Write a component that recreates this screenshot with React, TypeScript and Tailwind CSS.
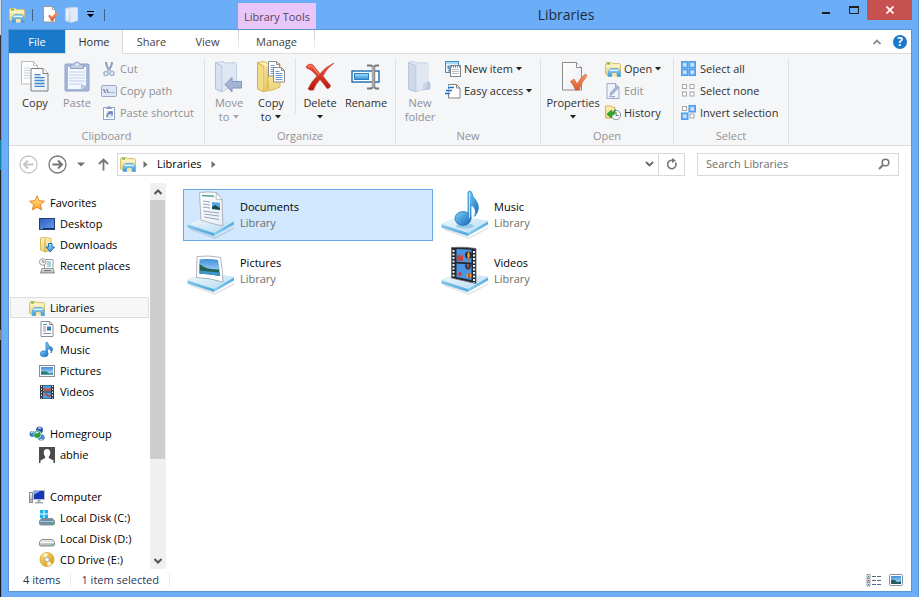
import React, { useState } from "react";

type IconProps = { className?: string };

/* Gradients shared by the icons below */
function Gradients() {
  const g = (id: string, a: string, b: string, diag = false) => (
    <linearGradient id={id} x1="0" y1="0" x2={diag ? "1" : "0"} y2="1">
      <stop offset="0" stopColor={a} />
      <stop offset="1" stopColor={b} />
    </linearGradient>
  );
  return (
    <svg width="0" height="0" className="absolute" aria-hidden="true">
      <defs>
        {g("gFolder", "#fdf3bd", "#ecd27a")}
        {g("gFolderDark", "#f8e6a0", "#d9b347", true)}
        {g("gPale", "#e8eef7", "#c0cde2", true)}
        {g("gBlue", "#a4e0fa", "#2f92d6")}
        {g("gNote", "#7fd0f7", "#1166b8", true)}
        {g("gPaper", "#ffffff", "#e9edf3", true)}
        {g("gPlate", "#f4fbff", "#b5d9f0", true)}
        {g("gPlateL", "#8ccbee", "#4aa3d8")}
        {g("gPlateR", "#4aa6dc", "#8fd0f2")}
        {g("gRed", "#f2583a", "#b5140c")}
        {g("gOrange", "#f49a6a", "#dc5a2b")}
        {g("gStar", "#ffe88a", "#f9a02c")}
        {g("gScreen", "#2a5fc4", "#6c9be4", true)}
        {g("gSky", "#3f8fdc", "#c9ecf7")}
        {g("gGrey", "#f2f2f2", "#a9adb2")}
        {g("gGold", "#fbe373", "#cf9413", true)}
      </defs>
    </svg>
  );
}

function Svg({ w, h, className = "", children }: { w: number; h: number; className?: string; children: React.ReactNode }) {
  return (
    <svg width={w} height={h} viewBox={`0 0 ${w} ${h}`} className={`block shrink-0 ${className}`} aria-hidden="true" fill="none">
      {children}
    </svg>
  );
}

const LibraryIcon = ({ className }: IconProps) => (
  <Svg w={16} h={16} className={className}>
    <path d="M.5 13V2.500l1-1h5l1 1h7l1 1V13l-1 .8h-13z" fill="url(#gFolder)" stroke="#d8bf72" />
    <path d="M2 2.800h3" stroke="#4cb845" strokeWidth="1.400" />
    <path d="M1 5h14" stroke="#fffbe0" />
    <path d="M3 15.500 3.500 10 5.500 7.500h7.500l2 2.500.5 5.500H12V12q-2.500-1.500-5.500 0v3.500z" fill="url(#gBlue)" stroke="#5aaadb" strokeWidth=".8" />
    <path d="M4.500 9.500h9" stroke="#e2f6fe" />
    <path d="M7 15.500v-3q2.500-1 4.500 0v3z" fill="#f4e7ae" />
  </Svg>
);

const CheckPage = () => (
  <Svg w={16} h={17}>
    <path d="M.5.500h9l3 3v12.500H.5z" fill="#fff" stroke="#9b9b9b" />
    <path d="M9.500.5v3h3" stroke="#9b9b9b" />
    <path d="m5 10 2-1.500 2 2.500q2.500-4 5.500-5l1 2q-3.500 2.500-5.500 7.500H8.500Q7 12 5 10z" fill="url(#gOrange)" />
  </Svg>
);

const PaleFolderSmall = () => (
  <Svg w={14} h={16}>
    <path d="M.5 1.500 6 .5h6.500v13l-6.500 2-5.500-2z" fill="url(#gPale)" stroke="#c5d3e6" />
    <path d="M6 2.500v13l6.500-2V.5z" fill="#e4ecf7" opacity=".8" />
    <path d="M2.500 2.500v11" stroke="#f5f8fc" />
  </Svg>
);

const CopyIcon = () => (
  <Svg w={28} h={32}>
    <path d="M.5.5h12l4 4v18.500H.5z" fill="#fdfdfd" stroke="#bdbdbd" />
    <path d="M12.500.5v4h4" stroke="#bdbdbd" />
    <path d="M3 7h6M3 9.500h6M3 12h6M3 14.500h6M3 17h6" stroke="#c3d3e6" />
    <path d="M10 7.500h12l5 5V30H10z" fill="url(#gPaper)" stroke="#7d7d7d" />
    <path d="M22 7.500v5h5" fill="#fff" stroke="#7d7d7d" />
    <path d="M13.500 13.500h6M13.500 16.500h10M13.500 19.500h10M13.500 22.500h10M13.500 25.500h10" stroke="#3f87cf" />
    <path d="M13.500 15h6M13.500 18h10M13.500 21h10M13.500 24h10" stroke="#8ebbe8" />
  </Svg>
);

const PasteIcon = () => (
  <Svg w={26} h={32}>
    <rect x="1" y="3" width="24" height="27" rx="1" fill="#a5b6d8" stroke="#8ea2c9" />
    <path d="M4 6h18v18.500L17.500 28H4z" fill="#f5f8fd" />
    <path d="M5 11h16M5 14h16M5 17h16M5 20h16M5 23h14" stroke="#d1dcf0" strokeWidth="1.400" />
    <path d="M22 24h-5v4z" fill="#b8c6df" />
    <path d="M6.500 7.500V5q0-1.500 2-1.500h1Q10.500 1 13 1t3.500 2.500h1q2 0 2 1.500v2.500z" fill="#c2cee4" stroke="#8ea2c9" />
    <circle cx="13" cy="3.500" r="1" fill="#fff" />
  </Svg>
);

const CutIcon = () => (
  <Svg w={16} h={16}>
    <path d="M5 1q0 4 3.500 8.500M11 1q0 4-3.500 8.500" stroke="#8d9dba" strokeWidth="2" />
    <circle cx="5" cy="12.500" r="2" stroke="#a3b5d4" strokeWidth="1.600" />
    <circle cx="11" cy="12.500" r="2" stroke="#a3b5d4" strokeWidth="1.600" />
    <path d="m6 11 2-3 2 3" stroke="#a3b5d4" strokeWidth="1.500" />
  </Svg>
);

const CopyPathIcon = () => (
  <Svg w={16} h={16}>
    <rect x=".5" y="2.500" width="15" height="11" rx="1" fill="#dfe6f3" stroke="#9aa9c6" />
    <path d="m2.500 6 2 4M5.500 6l2 4" stroke="#6c7ea6" strokeWidth="1.200" />
    <path d="M8.500 9.500h1M10.500 9.500h1M12.500 9.500h1" stroke="#6c7ea6" />
  </Svg>
);

const PasteShortcutIcon = () => (
  <Svg w={16} h={16}>
    <path d="M2.500 2.500h11v12h-11z" fill="#fff" stroke="#8fa3c9" />
    <path d="M5 4V2h1.500q1.500-2 3 0H11v2z" fill="#8fa3c9" />
    <rect x="5" y="6" width="7" height="7" fill="#dae3f2" />
    <path d="M6 12q0-4 4-4M7.500 7H11v3.500" stroke="#657eb3" strokeWidth="1.400" />
  </Svg>
);

const MoveToIcon = () => (
  <Svg w={30} h={32}>
    <path d="M1.500 1.500 9 .5l3 1.500 9-.5 1.500 1v19L8 31 1.500 28z" fill="url(#gPale)" stroke="#c3d0e4" />
    <path d="M1.500 1.500 8 5v26l-6.500-3z" fill="#d8e1ef" stroke="#b3c2dc" />
    <path d="M8.500 5 12 3.500l10-1V21l-9 6-4.500 3.500z" fill="#dfe7f3" />
    <path d="m11 23.500 7-7v4h9.500v6.500H18v4z" fill="#a3b5d3" stroke="#8296bd" />
  </Svg>
);

const Page = ({ x, y }: { x: number; y: number }) => (
  <g transform={`translate(${x} ${y})`}>
    <path d="M.5.500h8l3 3v11.500H.5z" fill="#fff" stroke="#8c8c8c" />
    <path d="M8.500.5v3h3" stroke="#8c8c8c" />
    <path d="M2.500 4.500h4M2.500 6.500h7M2.500 8.500h7M2.500 10.500h7M2.500 12.500h7" stroke="#6c9ccb" />
  </g>
);

const CopyToIcon = () => (
  <Svg w={30} h={32}>
    <path d="M1.500 1.500 8 .5l4 2h12V26l-7 3-9 1.500-6.500-3z" fill="url(#gFolder)" stroke="#e0bb5c" />
    <path d="M1.500 1.500 8 5.500V31l-6.500-3z" fill="#f3da84" stroke="#dbae43" />
    <path d="M8.500 5.500h4.500v22L8.500 31z" fill="url(#gFolderDark)" />
    <Page x={12} y={0} />
    <Page x={17} y={6} />
  </Svg>
);

const DeleteIcon = () => (
  <Svg w={30} h={30}>
    <path d="M1.500 4Q5 .5 8 3q4 5 7 9Q20 5 29 1q-8 6-11 13 3 4 7.500 9.500Q25 27 22 26.500q-3.500-5-7-9Q10 23 8.500 28 5 29 3 27q3-7 9-13Q6 7 1.500 6z" fill="url(#gRed)" stroke="#c0342a" strokeWidth=".600" />
    <path d="M3.500 4.500Q6 3 7.500 4.500L14 13" stroke="#f9a28c" />
  </Svg>
);

const RenameIcon = () => (
  <Svg w={30} h={28}>
    <rect x="1" y="8" width="27" height="11" fill="#fff" stroke="#1e69b0" strokeWidth="1.400" />
    <rect x="3.500" y="10.500" width="14" height="6" fill="url(#gBlue)" stroke="#2f7dc0" />
    <path d="M16 2.500h4l2.500 1.500L25 2.500h3M16 25.500h4l2.500-1.500 2.500 1.500h3" stroke="#777" strokeWidth="2" />
    <path d="M22.500 3v22" stroke="#8a8a8a" strokeWidth="3.500" />
    <path d="M22 4v20" stroke="#c9c9c9" />
  </Svg>
);

const NewFolderIcon = () => (
  <Svg w={26} h={32}>
    <path d="M1.500 1.500 6 .5l4 1.500 9-.5 2 1v18l2 1.500v6l-9 1-5 2-7.500-3z" fill="url(#gPale)" stroke="#c9d5e7" />
    <path d="M1.500 1.500 9 5v26l-7.500-3z" fill="#cdd9ea" stroke="#b7c6de" />
    <path d="M9.500 5 21 2.500v18l-5 2v5l-6.500 3z" fill="#dfe7f3" />
    <path d="m20.500 20.500 2.500 1.500v6l-8 1.500 5.500-3z" fill="#b6c5dd" />
  </Svg>
);

const NewItemIcon = () => (
  <Svg w={16} h={16}>
    <path d="M.5.500h13v11H.5z" fill="#e2f2fc" stroke="#3a8dc9" />
    <path d="M1 2h12" stroke="#a9d8f3" strokeWidth="2" />
    <path d="M4.500 5q-3 1 0 2.500t-1 2.500" stroke="#2d84c5" strokeWidth="1.500" />
    <path d="M5.500 4.500h10v11h-10z" fill="#fff" stroke="#828282" />
    <path d="M6 5.500h9" stroke="#777" strokeDasharray="1 1" strokeWidth="2" />
    <path d="M7 8.500h7M7 10.500h7M7 12.500h7" stroke="#b6bcc4" />
  </Svg>
);

const EasyAccessIcon = () => (
  <Svg w={16} h={16}>
    <path d="M3.500 1.500h8l3.500 3.500v10H3.500z" fill="#fff" stroke="#828282" />
    <path d="M11.500 1.500V5H15" stroke="#828282" />
    <path d="M2 3.500h6M1 6.500h6M0 9.500h6" stroke="#f5f6f7" />
    <path d="M3 4.500h6M1 7.500h6M0 10.500h5" stroke="#1c72ce" strokeWidth="1.400" />
  </Svg>
);

const PropertiesIcon = () => (
  <Svg w={28} h={32}>
    <path d="M3.500 1.500h14l5 5v22.500h-19z" fill="url(#gPaper)" stroke="#8b8b8b" />
    <path d="M17.500 1.500v5h5" fill="#fff" stroke="#8b8b8b" />
    <path d="m11.500 20.500 3.500-2.500 3 5q4-7 8.500-10l1.500 2q-5.500 6-8 14h-3.500Q15 25 11.500 20.500z" fill="url(#gOrange)" stroke="#d4602f" strokeWidth=".7" />
  </Svg>
);

const EditIcon = () => (
  <Svg w={16} h={16}>
    <path d="M2 .5h8.500l3.500 3.500v11.500H2z" fill="#eef2f9" stroke="#9cabc9" />
    <path d="M10.500.5V4H14" stroke="#9cabc9" />
    <path d="m5 12 .8-2.500 5.700-6 1.700 1.600L7.500 11z" fill="#a9b9d7" stroke="#8295bb" strokeWidth=".7" />
    <path d="M4 13.500q2-1 3 0t3 0" stroke="#8295bb" />
  </Svg>
);

const HistoryIcon = () => (
  <Svg w={16} h={16}>
    <path d="M.5 1h6l1 1.500H10v8L6 13H.500z" fill="url(#gFolder)" stroke="#d9b24c" />
    <circle cx="11" cy="10" r="4.700" fill="#f5f8fa" stroke="#8d979e" />
    <path d="M11 7v3.500h2.500" stroke="#66727b" />
    <path d="m2 9 4.500-4v2.500q3 0 3.500-3 1 5.500-3.500 6V13z" fill="#2aa82b" stroke="#1b851f" strokeWidth=".6" />
  </Svg>
);

function Tile({ x, y, on }: { x: number; y: number; on: boolean }) {
  return on ? (
    <g>
      <rect x={x} y={y} width="7.500" height="7.500" fill="#4b9ff0" />
      <rect x={x + 2} y={y + 2} width="3.500" height="3.500" fill="#d3e8fb" stroke="#9accf8" />
    </g>
  ) : (
    <rect x={x + 1.5} y={y + 1.5} width="4" height="4" fill="#fff" stroke="#a6a6a6" />
  );
}

const SelectIcon = ({ on }: { on: [boolean, boolean, boolean, boolean] }) => (
  <Svg w={16} h={16}>
    <Tile x={0} y={0} on={on[0]} />
    <Tile x={7.5} y={0} on={on[1]} />
    <Tile x={0} y={7.500} on={on[2]} />
    <Tile x={7.500} y={7.500} on={on[3]} />
  </Svg>
);

const StarIcon = () => (
  <Svg w={16} h={16}>
    <path d="m8 .8 2.100 4.900 5.300.5-4 3.500 1.200 5.200L8 12.200l-4.600 2.700 1.200-5.200-4-3.500 5.300-.5z" fill="url(#gStar)" stroke="#e8862a" />
  </Svg>
);

const DesktopIcon = () => (
  <Svg w={16} h={16}>
    <rect x=".5" y="2.500" width="15" height="11" fill="url(#gScreen)" stroke="#23407c" />
    <path d="M1 12.500h14" stroke="#1b2f5c" />
    <path d="M1.500 12.500h2" stroke="#6fd0f0" />
  </Svg>
);

const DownloadsIcon = () => (
  <Svg w={16} h={16}>
    <path d="M1.500 1 6 .5l6 1V13l-6 2-4.500-2z" fill="url(#gFolder)" stroke="#dcb856" />
    <path d="M6 2v13" stroke="#cfa53d" />
    <path d="M9.500 6.500h3.500V10h2.500L11.200 15 7 10h2.500z" fill="url(#gBlue)" stroke="#1f6fb5" />
  </Svg>
);

const RecentIcon = () => (
  <Svg w={16} h={16}>
    <path d="M5.500 1.500h8.500v9H5.500z" fill="#fff" stroke="#9a9fa5" />
    <path d="M8 4h4M8 6h4M8 8h4" stroke="#5da2bd" />
    <path d="m3 10.500-1.500 4.500h14L14 10.500z" fill="url(#gGrey)" stroke="#8c9196" />
    <path d="M5 12.500h7" stroke="#6a6f74" />
    <circle cx="3.800" cy="4" r="3.300" fill="#f6f8fa" stroke="#9aa0a6" />
    <path d="M3.800 2v2.200h1.800" stroke="#6c7378" />
  </Svg>
);

const DocSmallIcon = () => (
  <Svg w={16} h={16}>
    <path d="M2 .5h8.500l3.500 3v12H2z" fill="#fff" stroke="#8a8f96" />
    <path d="M10.500.5v3H14" stroke="#8a8f96" />
    <path d="M4 3.500h4" stroke="#4f9aa8" />
    <path d="M4 6h3M4 8h3M4 10h3M4 12.500h8" stroke="#8d96ad" />
    <rect x="8" y="5.500" width="4" height="4" fill="#3c80c8" />
    <path d="M8 8.500h4" stroke="#2a7e5c" />
  </Svg>
);

const NoteSmallIcon = () => (
  <Svg w={16} h={16}>
    <path d="M7 .5h1.500Q9 4 12 5t0 6q1-3.500-3.500-4.500V12H7z" fill="url(#gNote)" stroke="#2b84cc" strokeWidth=".8" />
    <ellipse cx="5.200" cy="11.800" rx="4" ry="3" fill="url(#gNote)" stroke="#2b84cc" strokeWidth=".8" />
  </Svg>
);

const PictureSmallIcon = () => (
  <Svg w={16} h={16}>
    <rect x=".5" y="2.500" width="15" height="11" fill="#fff" stroke="#898e94" />
    <rect x="2" y="4" width="12" height="8" fill="url(#gSky)" />
    <path d="M2 8.500q5-1 7 1t5 0V12H2z" fill="#2b7b76" />
    <path d="M2 11.500h12" stroke="#4fa8cf" />
  </Svg>
);

const VideoSmallIcon = () => (
  <Svg w={16} h={16}>
    <rect x="1" y="1" width="14" height="14" fill="#2e3440" />
    <path d="M2.500 1.500v13M13.500 1.500v13" stroke="#e8ecef" strokeDasharray="1.500 1.500" />
    <rect x="4" y="1.500" width="8" height="6" fill="#4aa0e2" />
    <rect x="4" y="8.500" width="8" height="6" fill="#4aa0e2" />
    <path d="M4 4.500q2-1.500 3 0t5-1v3.500H5z" fill="#c45343" />
    <path d="M5 10q3-1 4 .5t3 0V12l-3 1z" fill="#b94a3f" />
  </Svg>
);

const HomegroupIcon = () => (
  <Svg w={16} h={16}>
    <circle cx="3.500" cy="8" r="3" fill="#3f78c2" />
    <circle cx="10.500" cy="4" r="3.500" fill="#2b57ac" />
    <circle cx="12.300" cy="11.500" r="3.300" fill="#4d88cf" />
    <circle cx="8.300" cy="8.500" r="3.800" fill="#2c9c43" stroke="#cfe6f5" strokeWidth=".7" />
    <path d="M2 7q1-1.500 2.500-1M9 2.500q1.500-1.200 3 0M6.500 7.500q1-1.500 3-1M11 13.500q1 1 2.500 0" stroke="#d5ecfb" strokeWidth="1.200" />
  </Svg>
);

const UserIcon = () => (
  <Svg w={16} h={16}>
    <rect width="16" height="16" fill="#4b4b4b" />
    <path d="M8 2q3.300 0 3.300 3.800 0 2.500-1.500 4V11l4.700 2.500V16h-13v-2.500L6.200 11V9.800q-1.500-1.500-1.500-4Q4.700 2 8 2z" fill="#fff" />
  </Svg>
);

const ComputerIcon = () => (
  <Svg w={16} h={16}>
    <rect x=".5" y="3.500" width="3" height="10" fill="url(#gGrey)" stroke="#8a8f95" />
    <path d="M1.500 10.500h1" stroke="#2faa3c" />
    <rect x="4.500" y="1.500" width="11" height="9" fill="#1637b4" stroke="#b9bfc8" />
    <path d="M5 2h6q-3 3-6 3.500z" fill="#7fa5ee" />
    <path d="M8.500 11h3v2h2.500v1.500H6V13h2.500z" fill="#a7adb5" />
  </Svg>
);

const DriveIcon = ({ system }: { system?: boolean }) => (
  <Svg w={16} h={16}>
    {system && (
      <path d="M1 0h3.500v3.500H1zM5.500 0H9v3.500H5.500zM1 4.500h3.500V8H1zM5.500 4.500H9V8H5.500z" fill="#18b4ee" />
    )}
    <path d="M2.500 8.500h11l2 2.500v3l-1 1h-13l-1-1v-3z" fill={system ? "#6e8fa6" : "url(#gGrey)"} stroke="#8a8e93" />
    <path d="M1 11.500h14" stroke={system ? "#a5c7dc" : "#fff"} />
    <path d="M12.500 13.500h1.500" stroke="#3ccb3a" strokeWidth="1.600" />
  </Svg>
);

const DiscIcon = () => (
  <Svg w={16} h={16}>
    <circle cx="8" cy="7.500" r="7" fill="url(#gGold)" stroke="#c9971f" strokeWidth=".7" />
    <path d="M8 7.500 3.500 2.500Q6 .8 8.500 1zM8 7.500l5 4.500q-2 2-4.500 2.300z" fill="#fff6c9" />
    <circle cx="8" cy="7.500" r="2.300" fill="#e9edf1" stroke="#9fa4a8" strokeWidth=".8" />
    <circle cx="8" cy="7.500" r=".9" fill="#fff" />
  </Svg>
);

/* Glass stand on which every large library icon sits */
const Plate = () => (
  <g>
    <path d="M3 38 28 47l19-10v2L28 49 3 40z" fill="#000" opacity=".1" />
    <path d="M.5 34 27 42.500V46L.5 37.500z" fill="url(#gPlateL)" />
    <path d="M27 42.500 47 31v3.500L27 46z" fill="url(#gPlateR)" />
    <path d="M.5 34 18 27l29 4-20 11.500z" fill="url(#gPlate)" stroke="#cdeaf9" strokeWidth=".8" />
  </g>
);

const DocumentsLarge = () => (
  <Svg w={48} h={50}>
    <Plate />
    <path d="M12.500 2.500q9-1 17 0l5.500 7L36 36q-11-2-22-6z" fill="url(#gPaper)" stroke="#9fa6ae" strokeWidth=".8" />
    <path d="M29.500 2.500 29 9q3 1 6 .5z" fill="#fff" stroke="#9fa6ae" strokeWidth=".7" />
    <path d="m15 5.500 12 .8" stroke="#4aa79e" strokeWidth="1.500" />
    <path d="m16 11 7 1M16 14l7 1M16 17l7 1M16 21l16 2M17 24l15 2M17 27l15 2.500" stroke="#9a9fc0" />
    <path d="m25 12 8 .8v7L25 19z" fill="#5fa4e2" />
    <path d="m25 17 3-2 5 3v2L25 19z" fill="#174d49" />
  </Svg>
);

const MusicLarge = () => (
  <Svg w={48} h={50}>
    <Plate />
    <ellipse cx="24" cy="36" rx="9" ry="2.500" fill="#5faede" opacity=".5" />
    <path d="M27 2q2-2 3.500 0 1 5 4.500 8.500 5.500 8-1.500 16 3-8.500-3.500-11.500v14H27z" fill="url(#gNote)" stroke="#2f8ad1" strokeWidth=".8" />
    <ellipse cx="22" cy="28.500" rx="8" ry="7" fill="url(#gNote)" stroke="#2878bc" strokeWidth=".8" />
    <path d="M28.500 3v25" stroke="#b9e6fc" />
  </Svg>
);

const PicturesLarge = () => (
  <Svg w={48} h={50}>
    <Plate />
    <path d="M10 10.500q12-1.500 23.500 1 2 11 2.500 24.500Q23 32 9.500 31.500z" fill="#fff" stroke="#9ba2a8" strokeWidth=".8" />
    <path d="M12.500 13.500q10-1 18.500.5 2 8 2 16-9-2-20.500-2.500z" fill="url(#gSky)" />
    <path d="M12.500 18q4 3 7 4t12.500 1.500l1 6.500q-9-2-20.500-2.500z" fill="#226253" />
    <path d="m12.500 24.500 20 2v3.500q-9-2-20-2.500z" fill="#3b95c6" />
  </Svg>
);

const VideosLarge = () => (
  <Svg w={48} h={50}>
    <Plate />
    <path d="M10.500 1.500q12-1 24.500 1v35L10.500 32z" fill="#23272e" stroke="#626a72" strokeWidth=".8" />
    <path d="M12.500 4v28M33 5v32" stroke="#eef1f3" strokeWidth="2" strokeDasharray="2 1.500" />
    <path d="m15.500 3 15 .8v13l-15-1zM15.500 17.500l15 1V34l-15-3z" fill="#4a96e2" />
    <path d="m16 11 2-3 2 3 2-3v7l-6-.5z" fill="#cf3f38" />
    <circle cx="27.500" cy="9" r="3.500" fill="#2c2c3a" />
    <path d="M27.500 5.500q2.500 3.500 0 7.500-2.500-4 0-7.500z" fill="#eda13c" />
    <path d="m26.500 13.500 2 .2-1 2.300z" fill="#d65c2f" />
    <path d="M24 18.500h6q0 3.500-2 5h-2q-2-1.500-2-5z" fill="#2b2c3f" />
    <path d="M26 18.500h2l-1 5z" fill="#e1683c" />
    <circle cx="19" cy="28" r="2" fill="#c44540" />
    <circle cx="28" cy="29.500" r="2.500" fill="#ef9c2b" />
    <path d="M28 27v5" stroke="#a92828" strokeWidth="1.200" />
  </Svg>
);

const Caret = ({ className = "text-[#1e1e1e]" }: IconProps) => (
  <Svg w={6} h={4} className={className}>
    <path d="M0 0h6L3 3.500z" fill="currentColor" />
  </Svg>
);

/* Ribbon building blocks */
function BigButton({ icon, lines, caret, disabled, width }: { icon: React.ReactNode; lines: string[]; caret?: boolean; disabled?: boolean; width: string }) {
  const tone = disabled ? "text-[#8f9094]" : "text-[#2f3033]";
  return (
    <button disabled={disabled} className={`flex shrink-0 flex-col items-center ${width} ${tone}`}>
      <span className="flex h-[38px] items-center">{icon}</span>
      <span className="leading-[14px]">{lines[0]}</span>
      {(lines[1] || caret) && (
        <span className="flex h-[14px] items-center gap-1 leading-[14px]">
          {lines[1]}
          {caret && <Caret className={disabled ? "text-[#a5a5a8]" : "text-[#1e1e1e]"} />}
        </span>
      )}
    </button>
  );
}

function SmallButton({ icon, label, caret, disabled }: { icon: React.ReactNode; label: string; caret?: boolean; disabled?: boolean }) {
  return (
    <button disabled={disabled} className={`flex h-[22px] items-center gap-[3px] whitespace-nowrap ${disabled ? "text-[#8f9094]" : "text-[#2f3033]"}`}>
      {icon}
      {label}
      {caret && <Caret />}
    </button>
  );
}

function Group({ label, width, children }: { label: string; width: string; children: React.ReactNode }) {
  return (
    <section aria-label={label} className={`flex shrink-0 flex-col border-r border-[#e1e2e4] ${width}`}>
      <div className="flex flex-1 items-start">{children}</div>
      <div className="h-4 text-center leading-4 text-[#929396]">{label}</div>
    </section>
  );
}

function Ribbon() {
  return (
    <div className="flex h-[92px] shrink-0 overflow-hidden border-b border-[#dadbdc] bg-[#f5f6f7] pt-1 pb-px">
      <Group label="Clipboard" width="w-[196px]">
        <BigButton width="ml-1 w-11" icon={<CopyIcon />} lines={["Copy"]} />
        <BigButton width="w-10" icon={<PasteIcon />} lines={["Paste"]} disabled />
        <div className="ml-1">
          <SmallButton icon={<CutIcon />} label="Cut" disabled />
          <SmallButton icon={<CopyPathIcon />} label="Copy path" disabled />
          <SmallButton icon={<PasteShortcutIcon />} label="Paste shortcut" disabled />
        </div>
      </Group>
      <Group label="Organize" width="w-[191px]">
        <BigButton width="ml-1 w-10" icon={<MoveToIcon />} lines={["Move", "to"]} caret disabled />
        <BigButton width="ml-0.5 w-10" icon={<CopyToIcon />} lines={["Copy", "to"]} caret />
        <div className="ml-1 h-14 w-px self-start bg-[#e1e2e4]" />
        <BigButton width="ml-1 w-10" icon={<DeleteIcon />} lines={["Delete"]} caret />
        <BigButton width="ml-0.5 w-12" icon={<RenameIcon />} lines={["Rename"]} />
      </Group>
      <Group label="New" width="w-[145px]">
        <BigButton width="ml-1 w-10" icon={<NewFolderIcon />} lines={["New", "folder"]} disabled />
        <div className="ml-[5px]">
          <SmallButton icon={<NewItemIcon />} label="New item" caret />
          <SmallButton icon={<EasyAccessIcon />} label="Easy access" caret />
        </div>
      </Group>
      <Group label="Open" width="w-[133px]">
        <BigButton width="ml-1 w-14" icon={<PropertiesIcon />} lines={["Properties"]} caret />
        <div className="ml-1">
          <SmallButton icon={<LibraryIcon />} label="Open" caret />
          <SmallButton icon={<EditIcon />} label="Edit" disabled />
          <SmallButton icon={<HistoryIcon />} label="History" />
        </div>
      </Group>
      <Group label="Select" width="w-[115px]">
        <div className="ml-[7px]">
          <SmallButton icon={<SelectIcon on={[true, true, true, true]} />} label="Select all" />
          <SmallButton icon={<SelectIcon on={[false, false, false, false]} />} label="Select none" />
          <SmallButton icon={<SelectIcon on={[false, true, true, false]} />} label="Invert selection" />
        </div>
      </Group>
    </div>
  );
}

function TitleBar() {
  return (
    <header className="flex h-[29px] shrink-0 items-stretch">
      <div className="flex w-[230px] shrink-0 items-center pl-px">
        <LibraryIcon />
        <i className="ml-[7px] h-3 w-px bg-[#41608a]" />
        <button aria-label="Properties" className="ml-[10px]"><CheckPage /></button>
        <button aria-label="New folder" className="ml-[6px]"><PaleFolderSmall /></button>
        <button aria-label="Customize Quick Access Toolbar" className="ml-2">
          <Svg w={8} h={7}><path d="M0 .5h7" stroke="#000" /><path d="M0 3h7L3.500 6.500z" fill="#000" /></Svg>
        </button>
        <i className="ml-[9px] h-3 w-px bg-[#41608a]" />
      </div>
      <div className="mt-[3px] flex w-[78px] shrink-0 items-center justify-center bg-[#e9c6fa] pt-px text-[#56445f]">Library Tools</div>
      <h1 className="flex-1 pl-[3px] text-center text-sm leading-[29px] text-[#1d2b3c]">Libraries</h1>
      <button aria-label="Minimize" className="flex h-5 w-[27px] items-center justify-center">
        <Svg w={9} h={12}><path d="M0 9h8" stroke="#1e1e1e" strokeWidth="2" /></Svg>
      </button>
      <button aria-label="Maximize" className="flex h-5 w-[27px] items-center justify-center">
        <Svg w={10} h={8}><path d="M.5 1v6.500h9V1" stroke="#1e1e1e" /><path d="M0 1h10" stroke="#1e1e1e" strokeWidth="2" /></Svg>
      </button>
      <button aria-label="Close" className="flex h-5 w-[45px] items-center justify-center bg-[#c75050]">
        <Svg w={8} h={8}><path d="m.5.500 7 7m0-7-7 7" stroke="#fff" strokeWidth="1.700" /></Svg>
      </button>
    </header>
  );
}

function Tabs() {
  return (
    <nav className="flex h-6 shrink-0 items-stretch text-[#444]">
      <button className="w-14 border-b border-[#dadbdc] bg-[#1979ca] text-white">File</button>
      <button className="w-[58px] border-x border-[#dadbdc] bg-[#f5f6f7] text-[#2f3033]">Home</button>
      <div className="flex flex-1 border-b border-[#dadbdc]">
        <button className="w-[57px]">Share</button>
        <button className="w-[55px]">View</button>
        <div className="ml-[3px] flex w-[77px]">
          <i className="mb-1 w-px bg-[linear-gradient(#cfcfd4,#f4f4f6)]" />
          <button className="flex-1">Manage</button>
          <i className="mb-1 w-px bg-[linear-gradient(#cfcfd4,#f4f4f6)]" />
        </div>
        <div className="flex-1" />
        <button aria-label="Collapse ribbon" className="mr-3">
          <Svg w={8} h={6}><path d="m.5 5L4 1.500 7.500 5" stroke="#8c8c8c" strokeWidth="1.800" /></Svg>
        </button>
        <button aria-label="Help" className="mr-1 flex items-center">
          <span className="flex size-3.5 items-center justify-center rounded-full bg-[#1979ca] text-xs leading-3 font-bold text-white">?</span>
        </button>
      </div>
    </nav>
  );
}

const RoundArrow = ({ color, back }: { color: string; back?: boolean }) => (
  <Svg w={19} h={19}>
    <circle cx="9.500" cy="9.500" r="8.500" stroke={color} strokeWidth="1.300" />
    <path d={back ? "M14.500 9.500H5.500M9 5.500l-4 4 4 4" : "M4.500 9.500h9M10 5.500l4 4-4 4"} stroke={color} strokeWidth="2" />
  </Svg>
);

const Crumb = () => (
  <Svg w={5} h={7}><path d="M.5 0v7l4-3.500z" fill="#6f6f6f" /></Svg>
);

function AddressRow() {
  return (
    <div className="flex h-9 shrink-0 items-center pr-3 pl-[10px]">
      <button aria-label="Back" disabled><RoundArrow color="#c6c6c6" back /></button>
      <button aria-label="Forward" className="ml-[10px]"><RoundArrow color="#757575" /></button>
      <button aria-label="Recent locations" className="ml-[10px]">
        <Svg w={8} h={5}><path d="M0 .5h8L4 4.500z" fill="#6f6f6f" /></Svg>
      </button>
      <button aria-label="Up" className="ml-[13px]">
        <Svg w={11} h={13}><path d="M5.500 12.500V2M1 6l4.500-4.500L10 6" stroke="#757575" strokeWidth="1.800" /></Svg>
      </button>
      <div className="ml-2 flex h-[23px] flex-1 items-center border border-[#d9d9d9] pl-[2px]">
        <LibraryIcon />
        <span className="ml-[7px]"><Crumb /></span>
        <button className="mx-[9px] text-black">Libraries</button>
        <Crumb />
        <div className="flex-1" />
        <button aria-label="Previous locations" className="mr-1">
          <Svg w={9} h={6}><path d="m1 1 3.500 3.500L8 1" stroke="#6a6a6a" strokeWidth="1.900" /></Svg>
        </button>
        <button aria-label="Refresh" className="flex h-full w-[26px] items-center justify-center border-l border-[#d9d9d9]">
          <Svg w={12} h={12}>
            <path d="M9.500 4.500A4.200 4.200 0 1 1 6 2.300" stroke="#757575" strokeWidth="1.600" />
            <path d="M6 0v5l4-2.500z" fill="#757575" />
          </Svg>
        </button>
      </div>
      <label className="ml-3 flex h-[23px] w-[202px] items-center border border-[#d9d9d9] px-[8px]">
        <input aria-label="Search Libraries" placeholder="Search Libraries" className="min-w-0 flex-1 bg-transparent outline-none placeholder:text-[#6d6d6d]" />
        <Svg w={12} h={12}>
          <circle cx="7.500" cy="4.500" r="3.300" stroke="#757575" strokeWidth="1.500" />
          <path d="M5 7 1 11" stroke="#757575" strokeWidth="2" />
        </Svg>
      </label>
    </div>
  );
}

type Node = { label: string; icon: React.ReactNode; active?: boolean };
const tree: { root: Node; items: Node[] }[] = [
  {
    root: { label: "Favorites", icon: <StarIcon /> },
    items: [
      { label: "Desktop", icon: <DesktopIcon /> },
      { label: "Downloads", icon: <DownloadsIcon /> },
      { label: "Recent places", icon: <RecentIcon /> },
    ],
  },
  {
    root: { label: "Libraries", icon: <LibraryIcon />, active: true },
    items: [
      { label: "Documents", icon: <DocSmallIcon /> },
      { label: "Music", icon: <NoteSmallIcon /> },
      { label: "Pictures", icon: <PictureSmallIcon /> },
      { label: "Videos", icon: <VideoSmallIcon /> },
    ],
  },
  { root: { label: "Homegroup", icon: <HomegroupIcon /> }, items: [{ label: "abhie", icon: <UserIcon /> }] },
  {
    root: { label: "Computer", icon: <ComputerIcon /> },
    items: [
      { label: "Local Disk (C:)", icon: <DriveIcon system /> },
      { label: "Local Disk (D:)", icon: <DriveIcon /> },
      { label: "CD Drive (E:)", icon: <DiscIcon /> },
    ],
  },
];

function Sidebar() {
  return (
    <aside className="flex w-[157px] shrink-0">
      <div className="flex min-w-0 flex-1 flex-col gap-[21px] overflow-hidden pt-[10px] pr-px pl-px text-black">
        {tree.map(({ root, items }) => (
          <ul key={root.label}>
            <li>
              <button className={`flex h-[21px] w-full items-center gap-[5px] border pl-[18px] ${root.active ? "border-[#dedede] bg-[#f7f7f7]" : "border-transparent"}`}>
                {root.icon}
                {root.label}
              </button>
            </li>
            {items.map((n) => (
              <li key={n.label}>
                <button className="flex h-[21px] w-full items-center gap-[5px] pl-[29px] whitespace-nowrap">
                  {n.icon}
                  {n.label}
                </button>
              </li>
            ))}
          </ul>
        ))}
      </div>
      <div className="mt-px flex w-4 flex-col bg-[#f0f0f0]">
        <button aria-label="Scroll up" className="flex h-[17px] items-center justify-center">
          <Svg w={8} h={6}><path d="m.5 5L4 1.500 7.500 5" stroke="#555" strokeWidth="2" /></Svg>
        </button>
        <div className="mr-px flex-[259] bg-[#cdcdcd]" />
        <div className="flex-[93]" />
        <button aria-label="Scroll down" className="flex h-[17px] items-center justify-center">
          <Svg w={8} h={6}><path d="m.5 1L4 4.500 7.500 1" stroke="#555" strokeWidth="2" /></Svg>
        </button>
      </div>
    </aside>
  );
}

const libraries = [
  { name: "Documents", icon: <DocumentsLarge /> },
  { name: "Music", icon: <MusicLarge /> },
  { name: "Pictures", icon: <PicturesLarge /> },
  { name: "Videos", icon: <VideosLarge /> },
];

export default function App() {
  const [selected, setSelected] = useState("Documents");
  return (
    <div className="flex h-screen overflow-hidden bg-[linear-gradient(#d6dbe2_0_35px,#3a3133_35px_140px,#0d86a8_140px_170px,#221f22_170px_330px,#8b8480_330px_340px,#1d1a20_340px)] pl-px font-['Open_Sans','Noto_Sans',sans-serif] text-[11px] leading-4">
      <Gradients />
      <div className="flex min-w-0 flex-1 flex-col border-x border-[#5b95d6] bg-[#6badf6] px-[6px] pb-[5px]">
        <TitleBar />
        <div className="flex min-h-0 flex-1 flex-col border border-[#5b95d6] bg-white">
          <Tabs />
          <Ribbon />
          <AddressRow />
          <div className="flex min-h-0 flex-1">
            <Sidebar />
            <main className="min-w-0 flex-1 pt-[7px] pl-[17px]">
              <ul className="grid grid-cols-[repeat(2,250px)] gap-1">
                {libraries.map((l) => (
                  <li key={l.name}>
                    <button
                      onClick={() => setSelected(l.name)}
                      className={`flex h-[52px] w-full items-center gap-[5px] border pl-[3px] text-left ${selected === l.name ? "border-[#66a7e8] bg-[#d1e8ff]" : "border-transparent"}`}
                    >
                      {l.icon}
                      <span className="flex flex-col">
                        <span className="text-black">{l.name}</span>
                        <span className="text-[#6d6d6d]">Library</span>
                      </span>
                    </button>
                  </li>
                ))}
              </ul>
            </main>
          </div>
          <footer className="flex h-[22px] shrink-0 items-center pr-2 pl-[14px] text-[#1e395b]">
            <span>4 items</span>
            <i className="mx-[10px] h-3.5 w-px bg-[#ececec]" />
            <span>1 item selected</span>
            <i className="ml-[10px] h-3.5 w-px bg-[#ececec]" />
            <div className="flex-1" />
            <button aria-label="Details view" className="mr-2">
              <Svg w={15} h={13}>
                <path d="M1 .500h3v3.500H1zM1 4.500h3V8H1zM1 8.500h3V12H1z" fill="#fff" stroke="#8496ad" />
                <path d="M2 2.500h1" stroke="#2e9b49" /><path d="M2 6.500h1" stroke="#d63a2c" strokeWidth="1.500" /><path d="M2 10.500h1" stroke="#2d63c8" />
                <path d="M6 2.500h4M11 2.500h4M6 6.500h4M11 6.500h4M6 10.500h4M11 10.500h4" stroke="#53687f" />
              </Svg>
            </button>
            <button aria-label="Large icons view">
              <Svg w={14} h={12}>
                <rect x=".5" y=".5" width="13" height="11" rx="1" fill="#fff" stroke="#7d90a8" />
                <rect x="2" y="2" width="10" height="8" fill="url(#gSky)" />
                <path d="M2 6q4-1 5 1t5 0v3H2z" fill="#1f5d62" />
              </Svg>
            </button>
          </footer>
        </div>
      </div>
    </div>
  );
}
